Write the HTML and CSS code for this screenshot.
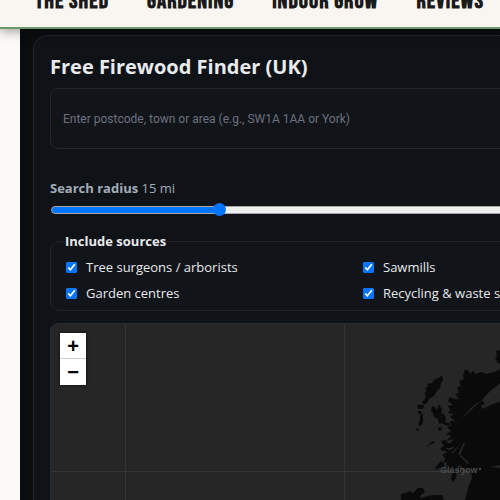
FILE: index.html
```html
<!DOCTYPE html>
<html lang="en">
<head>
  <meta charset="utf-8">
  <title>Free Firewood Finder (UK)</title>
  <link rel="stylesheet" href="styles.css">
</head>
<body>
  <header class="site-header">
    <nav class="site-nav">
      <a href="#">THE SHED</a>
      <a href="#">GARDENING</a>
      <a href="#">INDOOR GROW</a>
      <a href="#">REVIEWS</a>
    </nav>
  </header>

  <main class="page">
    <section class="finder">
      <h1>Free Firewood Finder (UK)</h1>

      <input class="place-input" type="text" aria-label="Location" placeholder="Enter postcode, town or area (e.g., SW1A 1AA or York)">

      <div class="radius">
        <label for="radius"><strong>Search radius</strong> <span id="radiusValue">15 mi</span></label>
        <input type="range" id="radius" min="1" max="53" value="15">
      </div>

      <fieldset class="sources">
        <legend>Include sources</legend>
        <label><input type="checkbox" checked> Tree surgeons / arborists</label>
        <label><input type="checkbox" checked> Sawmills</label>
        <label><input type="checkbox" checked> Garden centres</label>
        <label><input type="checkbox" checked> Recycling &amp; waste sites</label>
      </fieldset>

      <div class="map">
        <svg class="map-tiles" width="620" height="400" viewBox="0 0 620 400" aria-hidden="true">
          <path class="grid-line" d="M74.500 0V400M293.500 0V400M512.500 0V400M0 147.500H620"/>
          <g class="land">
            <!-- outer hebrides -->
            <path d="M391 51l-3 3-4 1-3 4-5 1 1 3-3 1 2 3-3 2 2 3-1 3-3 3 2 3 4-3 1-3 5-3 3-5 3-3 1-5 2-2z"/>
            <path d="M366 81l7 0-1 4-5 0zM367 87l3 0 1 3-4 0zM369 91l3-1 0 8-2 4-3-1 2-5zM366 104l2 1-1 2-2-1z"/>
            <!-- skye and the small isles -->
            <path d="M381 82l3 1 1 3 2-2 0-4 4 5-1 4 3 1 2 4-1 4 4 1 1 3-5-1-3-2-3 1-1-5-4-2-1-4-2-2zM387 103l3 0 1 3-3 1zM384 117l-4 1-3 3 5-1zM377 121l1 1-3 1z"/>
            <!-- mull -->
            <path d="M390 117l4-1 3 3 5 0 2 3-5 2-4 0 2 2-5 1-3-2 4-3z"/>
            <!-- mainland -->
            <path d="M414 46l3 0 2 4 3-3 3 3 5-2 5 2 8-2 6-3h160v300H390L406 190l9-17 2-9 4-10-1-6-7-3-5-4-4 7-3-1 1-6-4 5-3-2 3-7-5 2 1-5-3-3 5-3-3-3 7 1 4-4-9 2-2-2 6-2 4-5-8 2 5-5-5-2 5-3-4-4 4-1-1-5 5 0-5-4 4-3-6-1 2-3-2-4 5-1-5-4 2-4 5 2 4 0-4-5 4-1-2-6 4-1-2-5 5-2-1-4z"/>
            <path d="M449 26l-4 1 1 5-2 2 3 5 5 2V25z"/>
            <!-- islay, arran, kintyre -->
            <path d="M390 137l3 2 0 5-4 2-1-3-2 3-2-2zM396 138l4 1-1 6-3-1zM402 145l4 1-1 8-3 4-2-3zM408 143l4 4-1 5-3-4z"/>
            <!-- northern ireland -->
            <path d="M346 178l4-3 0-5 5-1 3-2 4 2 5-5 5 0 2 4-5 4 1 2 7-2 7-1 7 0 2 5 5 8-4 25-60 30-20-20-2-20 16-8z"/>
          </g>
          <g class="water">
            <path d="M450 58l-4 4-7 5-8 9 3 4-4 1 1 4 9-4 10-4z"/>
            <path d="M410 95l12-13 9-6-14 13zM407 131l6-13 1 1-5 12zM417 140l-8-8 1-1 8 8zM401 128l7-7-6 9zM439 143l10 1 6-2-6-1z"/>
          </g>
          <text class="place" x="389" y="149">Glasgow</text>
          <circle class="place-dot" cx="429" cy="145" r="1"/>
        </svg>
        <div class="zoom">
          <button type="button" aria-label="Zoom in">+</button>
          <button type="button" aria-label="Zoom out">−</button>
        </div>
      </div>
    </section>
  </main>

  <script>
    const radius = document.getElementById('radius');
    const radiusValue = document.getElementById('radiusValue');

    radius.addEventListener('input', () => {
      radiusValue.textContent = radius.value + ' mi';
      const pct = (radius.value - radius.min) / (radius.max - radius.min) * 100;
      radius.style.setProperty('--fill', pct + '%');
    });
  </script>
</body>
</html>
```

FILE: styles.css
```css
* {
  box-sizing: border-box;
}

body {
  margin: 0;
  min-height: 100vh;
  overflow: hidden;
  background: #fbfaf6;
  font-family: 'Segoe UI', 'Open Sans', sans-serif;
  font-size: 13px;
  color: #e8eaed;
}

.site-header {
  position: relative;
  display: flex;
  align-items: flex-end;
  height: 29px;
  padding: 0 35px 14px;
  background: #f9f5f1;
  border-bottom: 2px solid #6f9868;
  box-shadow: 0 2px 12px rgba(0, 0, 0, 0.4);
}

.site-nav {
  display: flex;
  gap: 38px;
}

.site-nav a {
  font-family: 'Bebas Neue', 'Liberation Sans Narrow', 'Liberation Sans', sans-serif;
  font-size: 23px;
  font-weight: bold;
  line-height: 24px;
  letter-spacing: 1px;
  color: #1a1a1a;
  text-decoration: none;
  white-space: nowrap;
}

.page {
  min-width: 676px;
  margin-left: 20px;
  padding: 6px 13px;
  background: #0a0d0f;
}

.finder {
  padding: 16px;
  background: #0f1317;
  border: 1px solid #20252a;
  border-radius: 14px;
}

.finder h1 {
  margin: 0 0 7px;
  font-size: 20px;
  line-height: 29px;
}

.place-input {
  display: block;
  width: 100%;
  height: 61px;
  padding: 0 12px;
  background: #111519;
  border: 1px solid #23282d;
  border-radius: 8px;
  color: #e8eaed;
  font-family: Roboto, Arial, sans-serif;
  font-size: 12px;
}

.place-input::placeholder {
  color: #6d7080;
}

.radius {
  margin-top: 28px;
  color: #a3adb8;
}

.radius label {
  display: block;
  line-height: 22px;
}

.radius input {
  --fill: 27%;
  -webkit-appearance: none;
  appearance: none;
  display: block;
  width: calc(100% - 2px);
  height: 13px;
  margin: 4px 1px 0;
  background: none;
}

.radius input::-webkit-slider-runnable-track {
  height: 8px;
  border: 1px solid #a5a7a9;
  border-radius: 4px;
  background: linear-gradient(to right, #0075ff var(--fill), #efefef var(--fill));
}

.radius input::-webkit-slider-thumb {
  -webkit-appearance: none;
  width: 13px;
  height: 13px;
  margin-top: -4px;
  border-radius: 50%;
  background: #0075ff;
}

.sources {
  display: grid;
  grid-template-columns: 1fr 1fr;
  gap: 6px;
  margin: 15px 0 12px;
  padding: 6px 13px 7px;
  background: #111418;
  border: 1px solid #20252a;
  border-radius: 10px;
}

.sources legend {
  padding: 0 1px;
  font-weight: bold;
  line-height: 20px;
}

.sources label {
  display: flex;
  align-items: center;
  gap: 9px;
  line-height: 20px;
  white-space: nowrap;
}

.sources input {
  width: 11px;
  height: 11px;
  margin: 0 0 0 2px;
  accent-color: #0075ff;
}

.map {
  position: relative;
  height: 400px;
  overflow: hidden;
  background: #262626;
  border: 1px solid #2a2d30;
  border-radius: 8px;
}

.map-tiles {
  display: block;
}

.grid-line {
  fill: none;
  stroke: #353535;
}

.land {
  fill: #0a0a0a;
}

.water {
  fill: #262626;
}

.place {
  fill: #4c4c4c;
  font-family: 'Liberation Sans', Arial, sans-serif;
  font-size: 9px;
  font-weight: bold;
}

.place-dot {
  fill: #606060;
}

.zoom {
  position: absolute;
  top: 9px;
  left: 9px;
  width: 26px;
  background: #fff;
  box-shadow: 0 0 3px rgba(0, 0, 0, 0.7);
}

.zoom button {
  display: block;
  width: 26px;
  height: 26px;
  padding: 0;
  background: #fff;
  border: 0;
  color: #000;
  font-family: 'Liberation Sans', Arial, sans-serif;
  font-size: 20px;
  font-weight: bold;
  line-height: 26px;
  cursor: pointer;
}

.zoom button:first-child {
  border-bottom: 1px solid #ccc;
}
```
